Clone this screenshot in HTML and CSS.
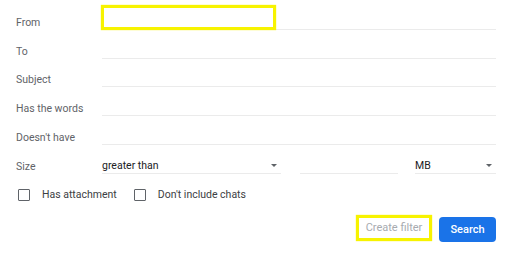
FILE: index.html
```html
<!DOCTYPE html>
<html lang="en">
<head>
    <meta charset="UTF-8">
    <meta name="viewport" content="width=device-width, initial-scale=1.0">
    <title>Search filter</title>
    <link rel="stylesheet" href="styles.css">
</head>
<body>
    <form class="filter">
        <div class="row">
            <label class="label">From</label>
            <div class="field"></div>
            <div class="highlight highlight-from"></div>
        </div>
        <div class="row">
            <label class="label">To</label>
            <div class="field"></div>
        </div>
        <div class="row">
            <label class="label">Subject</label>
            <div class="field"></div>
        </div>
        <div class="row">
            <label class="label">Has the words</label>
            <div class="field"></div>
        </div>
        <div class="row">
            <label class="label">Doesn't have</label>
            <div class="field"></div>
        </div>
        <div class="row">
            <label class="label">Size</label>
            <div class="select size-op"><span>greater than</span><span class="arrow"></span></div>
            <div class="field size-num"></div>
            <div class="select size-unit"><span>MB</span><span class="arrow"></span></div>
        </div>

        <div class="checks">
            <label class="check check-attach"><span class="box"></span>Has attachment</label>
            <label class="check"><span class="box"></span>Don't include chats</label>
        </div>

        <div class="actions">
            <button type="button" class="btn-filter">Create filter</button>
            <button type="button" class="btn-search">Search</button>
        </div>
    </form>
</body>
</html>
```

FILE: styles.css
```css
* {
    margin: 0;
    padding: 0;
    box-sizing: border-box;
}

body {
    font-family: Roboto, Arial, sans-serif;
    font-size: 10.5px;
    background-color: #fff;
    color: #202124;
    padding: 0 16px;
}

.filter {
    padding-top: 1px;
}

.row {
    position: relative;
    display: flex;
    align-items: flex-end;
    height: 28.8px;
}

.label {
    width: 86px;
    flex-shrink: 0;
    color: #5f6368;
    line-height: 13px;
    padding-bottom: 1px;
}

.field {
    flex: 1;
    height: 20px;
    border-bottom: 1px solid #ebebeb;
}

.highlight {
    position: absolute;
    border: 3px solid #f7f300;
    background-color: #fff;
    box-shadow: 0 0 1px #f7f300;
}

.highlight-from {
    left: 85px;
    top: 4px;
    width: 175px;
    height: 25px;
}

.select {
    display: flex;
    align-items: flex-end;
    justify-content: space-between;
    height: 20px;
    border-bottom: 1px solid #ebebeb;
    padding-right: 4px;
    padding-bottom: 1px;
    line-height: 13px;
}

.size-op { width: 179px; }
.size-num { flex: none; width: 98px; margin-left: 19px; }
.size-unit { width: 81px; margin-left: 17px; }

.arrow {
    width: 0;
    height: 0;
    margin-bottom: 5px;
    border-left: 3px solid transparent;
    border-right: 3px solid transparent;
    border-top: 3px solid #5f6368;
}

.checks {
    display: flex;
    align-items: center;
    height: 12px;
    margin-top: 15px;
    padding-left: 2px;
}

.check {
    display: flex;
    align-items: center;
    color: #3c4043;
    line-height: 13px;
}

.check-attach { margin-right: 17px; }

.box {
    width: 12px;
    height: 12px;
    border: 1.5px solid #5f6368;
    border-radius: 1px;
    margin-right: 12px;
}

.actions {
    display: flex;
    justify-content: flex-end;
    align-items: center;
    gap: 7px;
    margin-top: 13px;
}

.actions button {
    font-family: Roboto, Arial, sans-serif;
    font-size: 11px;
    cursor: pointer;
}

.btn-filter {
    width: 76px;
    height: 26px;
    border: 3px solid #f7f300;
    box-shadow: 0 0 1px #f7f300;
    background-color: #fff;
    color: #a7abb0;
}

.btn-search {
    width: 57px;
    height: 25px;
    margin-top: 3px;
    border: none;
    border-radius: 4px;
    background-color: #1a73e8;
    color: #fff;
    font-weight: 500;
}
```
